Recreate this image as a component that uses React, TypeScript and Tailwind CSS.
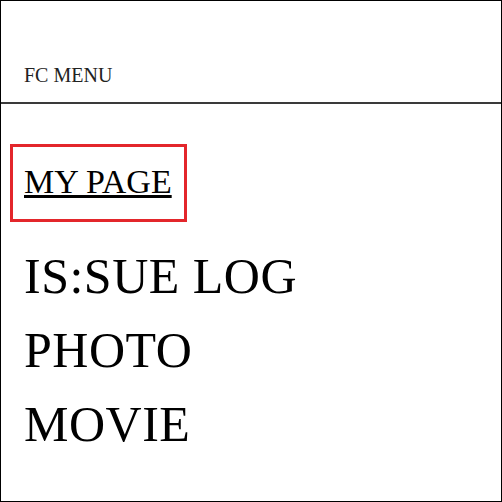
import React from 'react';

const serif = { fontFamily: '"Liberation Serif", "Times New Roman", serif' };

const items = ['IS:SUE LOG', 'PHOTO', 'MOVIE'];

export default function App() {
    return (
        <div className="w-[502px] h-[502px] border border-black bg-white text-black overflow-hidden" style={serif}>
            {/* ヘッダー */}
            <header className="h-[103px] border-b-2 border-[#3a3a3a] pt-[62px] pl-[23px]">
                <span className="text-[20px] leading-[24px] text-[#222]">FC MENU</span>
            </header>

            <nav className="pt-[40px]">
                <div className="ml-[9px] inline-block border-[3px] border-[#e3262b] pl-[11px] pr-[12px] pt-[15px] pb-[17px]">
                    <a href="#" className="block text-[34px] leading-[40px] underline decoration-[3px] underline-offset-[2px]">
                        MY PAGE
                    </a>
                </div>

                <ul className="mt-[17px] pl-[23px]">
                    {items.map((item) => (
                        <li key={item} className="text-[50px] leading-[74px] tracking-[0.5px]">
                            {item}
                        </li>
                    ))}
                </ul>
            </nav>
        </div>
    );
}
